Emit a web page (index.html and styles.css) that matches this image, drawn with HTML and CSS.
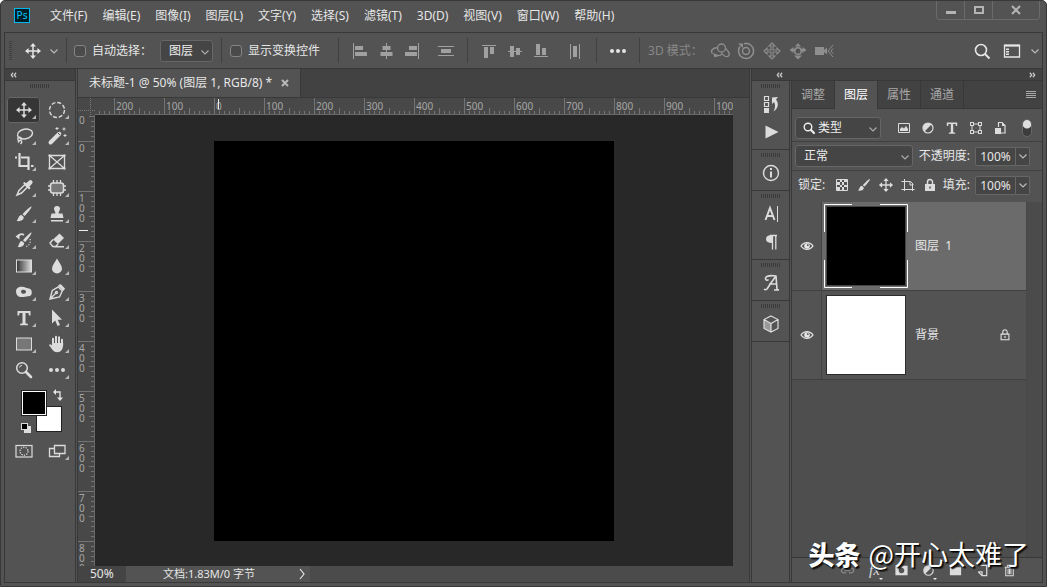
FILE: index.html
```html
<!DOCTYPE html>
<html lang="zh-CN">
<head>
<meta charset="utf-8">
<title>未标题-1</title>
<link rel="stylesheet" href="styles.css">
</head>
<body>
<svg class="defs" aria-hidden="true">
  <symbol id="move" viewBox="0 0 24 24"><path d="M12 6v12M6 12h12" stroke="currentColor" stroke-width="1.5"/><path d="M12 4l3 3.6H9zM12 20l3-3.6H9zM4 12l3.6-3v6zM20 12l-3.6-3v6z" fill="currentColor"/></symbol>
  <symbol id="ellipse" viewBox="0 0 24 24"><circle cx="12" cy="12" r="7.5" fill="none" stroke="currentColor" stroke-width="1.4" stroke-dasharray="4 1.9"/></symbol>
  <symbol id="lasso" viewBox="0 0 24 24"><g fill="none" stroke="currentColor" stroke-width="1.4"><ellipse cx="13" cy="10" rx="7.600" ry="4.800" transform="rotate(-12 13 10)"/><circle cx="7.500" cy="15" r="1.700"/><path d="M9 16.500c1.500 1 .5 2.500-.5 3.500M7 17l-1 1.500"/></g></symbol>
  <symbol id="wand" viewBox="0 0 24 24"><path d="M5.500 18.500L14 10" stroke="currentColor" stroke-width="4" stroke-linecap="round"/><path d="M14.500 9.500l1-1" stroke="currentColor" stroke-width="3"/><path d="M13 9l2 2" stroke="#535353"/><path d="M12 3v3M10.500 4.500h3M19 3.500v3M17.500 5h3M20 10v3M18.500 11.500h3" stroke="currentColor"/></symbol>
  <symbol id="crop" viewBox="0 0 24 24"><path d="M7.500 3v13H17M3 7.500h2M9 7.500h7.500V20" fill="none" stroke="currentColor" stroke-width="2.200"/><path d="M19 15h2.500v2H19z" fill="currentColor"/></symbol>
  <symbol id="frame" viewBox="0 0 24 24"><path d="M4.500 5.500h15v13h-15zM4.500 5.500l15 13M19.500 5.500l-15 13" fill="none" stroke="currentColor" stroke-width="1.3"/><path d="M3.500 4.500h2v2h-2zM18.500 4.500h2v2h-2zM3.500 17.500h2v2h-2zM18.500 17.500h2v2h-2z" fill="currentColor"/></symbol>
  <symbol id="dropper" viewBox="0 0 24 24"><path d="M5 19l2-4.500 6-6 2.500 2.500-6 6z" fill="none" stroke="currentColor" stroke-width="1.5"/><path d="M11 7l1.500-1 1.500 1.300L17 4.700a2 2 0 0 1 3 3L17.500 10.500l1 1.700-1.500 1.300z" fill="currentColor"/></symbol>
  <symbol id="patch" viewBox="0 0 24 24"><rect x="5.500" y="7" width="13" height="10" rx="2.500" fill="#777" stroke="currentColor" stroke-width="1.500"/><path d="M8.500 4v3M12 4v3M15.500 4v3M8.500 17v3M12 17v3M15.500 17v3M3 10h3M3 14h3M18 10h3M18 14h3" stroke="currentColor" stroke-width="1.300"/></symbol>
  <symbol id="brush" viewBox="0 0 24 24"><path d="M19.500 4.500c.8.800-5 7.900-7 9.500l-2-1.700C12 10.300 18.700 3.700 19.500 4.500zM9.500 13l2.200 2c.3 3-3.200 4.700-7.200 4 1.900-1.300 1.600-5.500 5-6z" fill="currentColor"/></symbol>
  <symbol id="stamp" viewBox="0 0 24 24"><path d="M12 4a3 3 0 0 1 3 3c0 1.700-1.400 2-1.400 4.500h3.900l1 4.500h-13l1-4.500h3.900C10.400 9 9 8.700 9 7a3 3 0 0 1 3-3zM6 18h12v1.500H6z" fill="currentColor"/></symbol>
  <symbol id="history" viewBox="0 0 24 24"><path d="M19.500 4.500c.8.800-4.500 7.900-6.500 9.500l-2-1.700C12.500 10.300 18.700 3.700 19.500 4.500zM10 13l2.200 2c0 3-3.200 4.700-6.700 4 1.900-1.300 1.100-5.500 4.500-6zM3.500 8.500l4-3v6z" fill="currentColor"/><path d="M6 8c2-2 4-2.500 6-1" fill="none" stroke="currentColor" stroke-width="1.600"/><path d="M18 11c1 4-1 7-5 8" fill="none" stroke="currentColor" stroke-width="1.2" stroke-dasharray="1.2 1.500"/></symbol>
  <symbol id="eraser" viewBox="0 0 24 24"><path d="M14.500 5.500L19 10l-6 6-5-4.500z" fill="currentColor"/><path d="M8 11.500L5 15l2.800 3.500h3L13 16M9 18.700h10" fill="none" stroke="currentColor" stroke-width="1.4"/></symbol>
  <linearGradient id="fade"><stop offset="0" stop-color="#333"/><stop offset="1" stop-color="#ddd"/></linearGradient>
  <symbol id="gradient" viewBox="0 0 24 24"><rect x="4.500" y="6" width="15" height="12" fill="url(#fade)" stroke="currentColor"/></symbol>
  <symbol id="drop" viewBox="0 0 24 24"><path d="M12 4.500c2 3.700 5 7 5 10a5 5 0 0 1-10 0c0-3 3-6.300 5-10z" fill="currentColor"/></symbol>
  <symbol id="dodge" viewBox="0 0 24 24"><path fill-rule="evenodd" d="M4 11.500c0-3 2.500-5 6-4.800 3 .2 4 1.300 6 1.600 2.500.4 3.800 1.500 3.800 4 0 2.700-1.300 4.200-3.800 4-2-.1-4 1-7 .8-3-.2-5-2.100-5-5.600zM9 11.500c0 1.500 1.200 2.300 2.700 2.300S14 13 14 11.800s-1-2.100-2.500-2.100S9 10.300 9 11.500z" fill="currentColor"/></symbol>
  <symbol id="pen" viewBox="0 0 24 24"><g fill="none" stroke="currentColor" stroke-width="1.4"><path d="M5 19l2.300-8.500 6-3.500 4 4-2.800 6zM5 19l6-6"/><circle cx="11.500" cy="12.500" r="1"/></g><path d="M13 5.500L15.500 4l4.500 4.500-1.500 2.500z" fill="currentColor"/></symbol>
  <symbol id="type" viewBox="0 0 24 24"><path d="M5.500 5h13v4.500H17L16.300 7H13.500v10.300l2.500.7v1.200H8v-1.200l2.500-.7V7H7.700L7 9.500H5.500z" fill="currentColor"/></symbol>
  <symbol id="arrow" viewBox="0 0 24 24"><path d="M7 3.500v14l3.200-3 2.300 5.500 2.500-1-2.300-5.300H17z" fill="currentColor"/></symbol>
  <symbol id="rect" viewBox="0 0 24 24"><rect x="4.500" y="6" width="15" height="12" fill="#777" stroke="currentColor"/></symbol>
  <symbol id="hand" viewBox="0 0 24 24"><path d="M8 12.500V6.700M11 11.500V4.700M14 11.500V5.200M17 12.500V7.700" stroke="currentColor" stroke-width="2" stroke-linecap="round"/><path d="M7 11h11.200c.3 5-1.700 9.300-5.700 9.300-4.500 0-5.500-3.500-8.500-7 .7-1.800 2-1 3 .4z" fill="currentColor"/></symbol>
  <symbol id="zoomer" viewBox="0 0 24 24"><circle cx="10" cy="10" r="5.300" fill="none" stroke="currentColor" stroke-width="1.5"/><path d="M14 14l5 5" stroke="currentColor" stroke-width="2.600" stroke-linecap="round"/><path d="M7.500 9.500a3 3 0 0 1 2.500-2.300" fill="none" stroke="currentColor"/></symbol>
  <symbol id="dots" viewBox="0 0 24 24"><g fill="currentColor"><circle cx="6" cy="12" r="2"/><circle cx="12" cy="12" r="2"/><circle cx="18" cy="12" r="2"/></g></symbol>
  <symbol id="mask" viewBox="0 0 24 24"><rect x="4" y="6.500" width="16" height="11.500" fill="none" stroke="currentColor" stroke-width="1.2"/><circle cx="12" cy="12.200" r="4" fill="none" stroke="currentColor" stroke-width="1.300" stroke-dasharray="1.300 1.200"/></symbol>
  <symbol id="screens" viewBox="0 0 24 24"><path d="M9 9.500H4.500v8h10V15M9.500 6.500h10.500v8H9.500z" fill="none" stroke="currentColor" stroke-width="1.300"/></symbol>
  <symbol id="swap" viewBox="0 0 12 12"><path d="M2 3h6v6" fill="none" stroke="currentColor" stroke-width="1.3"/><path d="M1 3l3-3v6zM8 12L5 8.500h6z" fill="currentColor"/></symbol>
  <symbol id="chev" viewBox="0 0 10 10"><path d="M1.500 3.500L5 7l3.500-3.500" fill="none" stroke="currentColor" stroke-width="1.200"/></symbol>
  <symbol id="dleft" viewBox="0 0 10 8"><path d="M4.500 1L2 4l2.500 3M8.500 1L6 4l2.500 3" fill="none" stroke="currentColor" stroke-width="1.600"/></symbol>
  <symbol id="dright" viewBox="0 0 10 8"><path d="M1.500 1L4 4 1.500 7M5.500 1L8 4 5.500 7" fill="none" stroke="currentColor" stroke-width="1.600"/></symbol>
  <symbol id="al-left" viewBox="0 0 24 24"><path d="M5 4h1v16H5zM7 7h8v4H7zM7 13h12v4H7z" fill="currentColor"/></symbol>
  <symbol id="al-center" viewBox="0 0 24 24"><path d="M12 4h1v16h-1zM8.500 7h8v4h-8zM6.500 13h12v4h-12z" fill="currentColor"/></symbol>
  <symbol id="al-right" viewBox="0 0 24 24"><path d="M18 4h1v16h-1zM9 7h8v4H9zM5 13h12v4H5z" fill="currentColor"/></symbol>
  <symbol id="al-vdist" viewBox="0 0 24 24"><path d="M4 7h16v1H4zM7 10h10v4H7zM4 16h16v1H4z" fill="currentColor"/></symbol>
  <symbol id="al-top" viewBox="0 0 24 24"><path d="M5 6h14v1H5zM7 8h4v11H7zM13 8h4v7h-4z" fill="currentColor"/></symbol>
  <symbol id="al-mid" viewBox="0 0 24 24"><path d="M5 12h14v1H5zM7 7h4v11H7zM13 9h4v7h-4z" fill="currentColor"/></symbol>
  <symbol id="al-bottom" viewBox="0 0 24 24"><path d="M5 17h14v1H5zM7 5h4v11H7zM13 9h4v7h-4z" fill="currentColor"/></symbol>
  <symbol id="al-hdist" viewBox="0 0 24 24"><path d="M7 5h1v15H7zM10 7h4v11h-4zM16 5h1v15h-1z" fill="currentColor"/></symbol>
  <symbol id="orbit" viewBox="0 0 24 24"><g fill="none" stroke="currentColor" stroke-width="1.300"><circle cx="13.500" cy="9" r="4"/><path d="M9.500 8.500C4.500 9 2 12 4.500 14.500M17.500 9.500c3 2.500 4.500 5.500 3 7.500-2 1.500-5 0-6.500-2.500-1 2-3 2.500-5 2"/></g><path d="M5 14l6.500 2.500-5 2z" fill="currentColor"/></symbol>
  <symbol id="roll" viewBox="0 0 24 24"><g fill="none" stroke="currentColor" stroke-width="1.500"><circle cx="12" cy="12" r="3.500"/><path d="M6 7.500a7.500 7.500 0 1 0 4-2.800"/></g><path d="M4 4.500h5v4.500z" fill="currentColor"/></symbol>
  <symbol id="pan3d" viewBox="0 0 24 24"><path d="M12 4l3 3h-2v4h4V9l3 3-3 3v-2h-4v4h2l-3 3-3-3h2v-4H7v2l-3-3 3-3v2h4V7H9z" fill="none" stroke="currentColor" stroke-width="1.100"/></symbol>
  <symbol id="slide" viewBox="0 0 24 24"><circle cx="12" cy="12" r="3.300" fill="none" stroke="currentColor" stroke-width="1.500"/><path d="M12 4l3 3.500H9zM12 20.500l4-4H8zM3.500 11l4-3v2h2v2h-2v2zM20.500 11l-4-3v2h-2v2h2v2z" fill="currentColor"/></symbol>
  <symbol id="camera" viewBox="0 0 24 24"><path d="M3 8h9v8H3zM12 11l3-2.500v7L12 13z" fill="currentColor"/><path d="M21 6l-5 6 5 6M21 9.500L19 12l2 2.500" fill="none" stroke="currentColor"/></symbol>
  <symbol id="search" viewBox="0 0 24 24"><circle cx="11" cy="11" r="5.500" fill="none" stroke="currentColor" stroke-width="1.600"/><path d="M15 15l4.500 4.500" stroke="currentColor" stroke-width="2"/></symbol>
  <symbol id="find" viewBox="0 0 16 16"><circle cx="7" cy="7" r="3.800" fill="none" stroke="currentColor" stroke-width="1.400"/><path d="M10 10l3 3" stroke="currentColor" stroke-width="2.200" stroke-linecap="round"/></symbol>
  <symbol id="space" viewBox="0 0 24 24"><path d="M4.500 6.500h15v11.500h-15z" fill="none" stroke="currentColor" stroke-width="1.300"/><path d="M4 5.500h16V7.500H4zM6 9.500h3V11H6zM6 12h3v1.500H6zM6 14.500h3V16H6z" fill="currentColor"/></symbol>
  <symbol id="steps" viewBox="0 0 24 24"><path d="M5.500 4.500h4v4h-4zM5.500 10.500h4v4h-4z" fill="none" stroke="currentColor" stroke-width="1.200"/><path d="M5 16h5v5H5zM13 5.500l6-.5-2 2.500c3 4 2.500 8.500-2.500 12 2-4 2-7 .5-9.500L13 12z" fill="currentColor"/></symbol>
  <symbol id="play" viewBox="0 0 24 24"><path d="M6.500 5.500v13l13-6.500z" fill="currentColor"/></symbol>
  <symbol id="info" viewBox="0 0 24 24"><circle cx="12" cy="12" r="7.500" fill="none" stroke="currentColor" stroke-width="1.400"/><path d="M11 7h2v2h-2zM11 10.500h2v6h-2z" fill="currentColor"/></symbol>
  <symbol id="char" viewBox="0 0 24 24"><path d="M6.500 18l4.500-12 4.500 12M8 14h6" fill="none" stroke="currentColor" stroke-width="2"/><path d="M18.500 4v16" stroke="currentColor"/></symbol>
  <symbol id="para" viewBox="0 0 24 24"><path d="M13 5v8c-4 0-6-1.500-6-4s2-4 6-4z" fill="currentColor"/><path d="M11 5.500h7M13.500 5v14.500M16.800 5v14.500" stroke="currentColor" stroke-width="1.300"/></symbol>
  <symbol id="glyph" viewBox="0 0 24 24"><path d="M17 5l1 13c.3 1 1 1 2 .7M17.500 5c-5-.5-10-1-11 2-.4 2 1.500 3 3 1.500M17 5C14 9 10.500 14 8 18c-1 1-2 1-3 0M10 13h7M15 19h5" fill="none" stroke="currentColor" stroke-width="1.600"/></symbol>
  <symbol id="cube" viewBox="0 0 24 24"><path d="M12 12v8l-7-3.500V8z" fill="#999"/><path d="M12 4l7 3.500v9L12 20l-7-3.500v-9zM5 7.500l7 4 7-4M12 11.500V20" fill="none" stroke="currentColor" stroke-width="1.200"/></symbol>
  <symbol id="image" viewBox="0 0 16 16"><path d="M2.500 3.500h11v9h-11z" fill="none" stroke="currentColor"/><path d="M4 11V9l2-2 2 1.500L10 6l2 3v2z" fill="currentColor"/></symbol>
  <symbol id="adjust" viewBox="0 0 16 16"><circle cx="8" cy="8" r="5" fill="none" stroke="currentColor" stroke-width="1.200"/><path d="M4.500 11.500l7-7a5 5 0 0 0-7 0 5 5 0 0 0 0 7z" fill="currentColor"/></symbol>
  <symbol id="shape" viewBox="0 0 16 16"><path d="M4 4h8v8H4z" fill="none" stroke="currentColor"/><path d="M2 2h4v4H2zM10 2h4v4h-4zM2 10h4v4H2zM10 10h4v4h-4z" fill="currentColor"/><path d="M3 3h2v2H3zM11 3h2v2h-2zM3 11h2v2H3zM11 11h2v2h-2z" fill="#535353"/></symbol>
  <symbol id="smart" viewBox="0 0 16 16"><path d="M6.500 7V2.500H10l3 3v7.500H9" fill="none" stroke="currentColor" stroke-width="1.200"/><path d="M10 2v4h3.500zM3 8h6v6H3z" fill="currentColor"/></symbol>
  <symbol id="checker" viewBox="0 0 16 16"><path d="M2.500 2.500h11v11h-11z" fill="none" stroke="currentColor"/><path d="M6 3h2v2H6zM10 3h3v2h-3zM3 5h3v3H3zM8 5h2v3H8zM6 8h2v2H6zM10 8h3v2h-3zM3 10h3v3H3zM8 10h2v3H8z" fill="currentColor"/></symbol>
  <symbol id="board" viewBox="0 0 16 16"><path d="M4.500 2v12M1.500 4.500h9l3 3M12.500 7v7M1.500 12.500h13M10 5v3h3" fill="none" stroke="currentColor"/></symbol>
  <symbol id="lock" viewBox="0 0 16 16"><path d="M5.500 7.500V5a2.500 2.500 0 0 1 5 0v2.500" fill="none" stroke="currentColor" stroke-width="1.500"/><path fill-rule="evenodd" d="M3 7h10v7H3zM7.200 9.500h1.600v2H7.200z" fill="currentColor"/></symbol>
  <symbol id="lock-line" viewBox="0 0 16 16"><path d="M5.500 7V4.500a2.500 2.500 0 0 1 5 0V7M3.500 7h9v6.500h-9z" fill="none" stroke="currentColor" stroke-width="1.200"/><path d="M7.200 9.500h1.600V11H7.200z" fill="currentColor"/></symbol>
  <symbol id="eye" viewBox="0 0 16 16"><path d="M2 8c3-4.500 9-4.500 12 0-3 4.500-9 4.500-12 0z" fill="none" stroke="currentColor" stroke-width="1.300"/><circle cx="8" cy="8" r="2.800" fill="currentColor"/><circle cx="8.800" cy="7.200" r=".9" fill="#535353"/></symbol>
  <symbol id="link" viewBox="0 0 16 16"><path d="M6.500 5.500H4a2.500 2.500 0 0 0 0 5h2.500M9.500 5.500H12a2.500 2.500 0 0 1 0 5H9.500M5 8h6" fill="none" stroke="currentColor" stroke-width="1.400"/></symbol>
  <symbol id="addmask" viewBox="0 0 16 16"><path fill-rule="evenodd" d="M1.500 3h13v10h-13zM8 5a3 3 0 1 0 .01 0z" fill="currentColor"/></symbol>
  <symbol id="folder" viewBox="0 0 16 16"><path d="M2 3h5l1 1.500h6V13H2z" fill="currentColor"/></symbol>
  <symbol id="newlayer" viewBox="0 0 16 16"><path d="M4.500 2.500h8v11H7.500l-4-4M7.500 13.500v-4h-4" fill="none" stroke="currentColor" stroke-width="1.300"/></symbol>
  <symbol id="trash" viewBox="0 0 16 16"><path d="M3 4.500h10M6 4V2.500h4V4M4 5v8.500h8V5M6.500 6v6M9.500 6v6M8 6v6" fill="none" stroke="currentColor" stroke-width="1.100"/></symbol>
  <symbol id="brackets" viewBox="0 0 84 84"><path d="M28 .5H.5V28M56 .5h27.500V28M83.500 56v27.500H56M28 83.500H.5V56" fill="none" stroke="currentColor"/></symbol>
</svg>

<div class="window">
  <header class="titlebar">
    <span class="logo">Ps</span>
    <nav class="menu">
      <button>文件(F)</button><button>编辑(E)</button><button>图像(I)</button><button>图层(L)</button><button>文字(Y)</button><button>选择(S)</button><button>滤镜(T)</button><button>3D(D)</button><button>视图(V)</button><button>窗口(W)</button><button>帮助(H)</button>
    </nav>
    <div class="winctl">
      <button aria-label="最小化"><svg viewBox="0 0 12 12"><path d="M1 7h10v3H1z" fill="currentColor"/></svg></button>
      <button aria-label="最大化"><svg viewBox="0 0 12 12"><path d="M2 3h8v6H2z" fill="none" stroke="currentColor" stroke-width="2"/></svg></button>
      <button class="close" aria-label="关闭"><svg viewBox="0 0 12 12"><path d="M2 2l8 8M10 2l-8 8" stroke="currentColor" stroke-width="2"/></svg></button>
    </div>
  </header>

  <div class="shell">
    <div class="options">
      <section class="group first">
        <span class="vgrip"></span>
        <button class="ico" aria-label="移动工具"><svg><use href="#move"/></svg></button>
        <button class="tiny" aria-label="预设"><svg><use href="#chev"/></svg></button>
      </section>
      <section class="group pick">
        <label class="check"><input type="checkbox">自动选择：</label>
        <span class="drop small"><select aria-label="自动选择对象"><option>图层</option></select><svg><use href="#chev"/></svg></span>
      </section>
      <section class="group show">
        <label class="check"><input type="checkbox">显示变换控件</label>
      </section>
      <section class="group dim">
        <button class="ico" aria-label="左对齐"><svg><use href="#al-left"/></svg></button><button class="ico" aria-label="水平居中"><svg><use href="#al-center"/></svg></button><button class="ico" aria-label="右对齐"><svg><use href="#al-right"/></svg></button><button class="ico apart" aria-label="垂直分布"><svg><use href="#al-vdist"/></svg></button>
      </section>
      <section class="group dim">
        <button class="ico" aria-label="顶对齐"><svg><use href="#al-top"/></svg></button><button class="ico" aria-label="垂直居中"><svg><use href="#al-mid"/></svg></button><button class="ico" aria-label="底对齐"><svg><use href="#al-bottom"/></svg></button><button class="ico apart" aria-label="水平分布"><svg><use href="#al-hdist"/></svg></button>
      </section>
      <section class="group"><button class="ico" aria-label="更多"><svg><use href="#dots"/></svg></button></section>
      <section class="group last dim">
        <span class="mode">3D 模式：</span>
        <button class="ico" aria-label="环绕"><svg><use href="#orbit"/></svg></button><button class="ico" aria-label="滚动"><svg><use href="#roll"/></svg></button><button class="ico" aria-label="平移"><svg><use href="#pan3d"/></svg></button><button class="ico" aria-label="滑动"><svg><use href="#slide"/></svg></button><button class="ico" aria-label="缩放相机"><svg><use href="#camera"/></svg></button>
      </section>
      <section class="group right">
        <button class="ico" aria-label="搜索"><svg><use href="#search"/></svg></button>
        <button class="ico" aria-label="工作区"><svg><use href="#space"/></svg></button>
        <button class="tiny" aria-label="工作区菜单"><svg><use href="#chev"/></svg></button>
      </section>
    </div>

    <div class="workspace">
      <aside class="tools">
        <div class="collapse"><button aria-label="折叠工具栏"><svg><use href="#dleft"/></svg></button></div>
        <span class="grip"></span>
        <div class="toolgrid">
          <button class="on more" aria-label="移动"><svg><use href="#move"/></svg></button><button class="more" aria-label="椭圆选框"><svg><use href="#ellipse"/></svg></button>
          <button class="more" aria-label="套索"><svg><use href="#lasso"/></svg></button><button class="more" aria-label="魔棒"><svg><use href="#wand"/></svg></button>
          <button class="more" aria-label="裁剪"><svg><use href="#crop"/></svg></button><button aria-label="图框"><svg><use href="#frame"/></svg></button>
          <button class="more" aria-label="吸管"><svg><use href="#dropper"/></svg></button><button class="more" aria-label="修补"><svg><use href="#patch"/></svg></button>
          <button class="more" aria-label="画笔"><svg><use href="#brush"/></svg></button><button class="more" aria-label="仿制图章"><svg><use href="#stamp"/></svg></button>
          <button class="more" aria-label="历史记录画笔"><svg><use href="#history"/></svg></button><button class="more" aria-label="橡皮擦"><svg><use href="#eraser"/></svg></button>
          <button class="more" aria-label="渐变"><svg><use href="#gradient"/></svg></button><button class="more" aria-label="模糊"><svg><use href="#drop"/></svg></button>
          <button class="more" aria-label="减淡"><svg><use href="#dodge"/></svg></button><button class="more" aria-label="钢笔"><svg><use href="#pen"/></svg></button>
          <button class="more" aria-label="文字"><svg><use href="#type"/></svg></button><button class="more" aria-label="路径选择"><svg><use href="#arrow"/></svg></button>
          <button class="more" aria-label="矩形"><svg><use href="#rect"/></svg></button><button class="more" aria-label="抓手"><svg><use href="#hand"/></svg></button>
          <button aria-label="缩放"><svg><use href="#zoomer"/></svg></button><button class="more" aria-label="编辑工具栏"><svg><use href="#dots"/></svg></button>
        </div>
        <div class="swatches">
          <button class="back" aria-label="背景色"></button>
          <button class="fore" aria-label="前景色"></button>
          <button class="swap" aria-label="切换颜色"><svg><use href="#swap"/></svg></button>
          <button class="reset" aria-label="默认颜色"></button>
        </div>
        <div class="toolgrid">
          <button aria-label="快速蒙版"><svg><use href="#mask"/></svg></button><button class="more" aria-label="屏幕模式"><svg><use href="#screens"/></svg></button>
        </div>
      </aside>

      <main class="doc">
        <div class="doctabs"><div class="doctab"><span>未标题-1 @ 50% (图层 1, RGB/8) *</span><button aria-label="关闭文档"><svg viewBox="0 0 8 8"><path d="M1 1l6 6M7 1L1 7" stroke="currentColor" stroke-width="2"/></svg></button></div></div>
        <div class="view">
          <div class="corner"></div>
          <div class="hruler"><div class="hscale"><span></span><span>200</span><span>100</span><span>0</span><span>100</span><span>200</span><span>300</span><span>400</span><span>500</span><span>600</span><span>700</span><span>800</span><span>900</span><span>1000</span></div><i class="hmark"></i></div>
          <div class="side"></div>
          <div class="vruler"><div class="vscale"><span class="tail">0</span><span>0</span><span>100</span><span>200</span><span>300</span><span>400</span><span>500</span><span>600</span><span>700</span><span>800</span></div><i class="vmark"></i></div>
          <div class="pasteboard"><div class="artwork"></div></div>
          <div class="side"></div>
          <footer class="status"><span class="zoom">50%</span><button class="docsize"><span>文档:1.83M/0 字节</span><svg viewBox="0 0 8 12"><path d="M2 1l4 5-4 5" fill="none" stroke="currentColor" stroke-width="1.200"/></svg></button></footer>
        </div>
      </main>

      <aside class="dock">
        <div class="collapse"><button class="strip" aria-label="展开面板"><svg><use href="#dleft"/></svg></button><button aria-label="折叠面板"><svg><use href="#dright"/></svg></button></div>
        <div class="dockbody">
          <div class="iconbar">
            <section><span class="grip"></span><button aria-label="历史记录"><svg><use href="#steps"/></svg></button><button aria-label="动作"><svg><use href="#play"/></svg></button></section>
            <section><span class="grip"></span><button aria-label="信息"><svg><use href="#info"/></svg></button></section>
            <section><span class="grip"></span><button aria-label="字符"><svg><use href="#char"/></svg></button><button aria-label="段落"><svg><use href="#para"/></svg></button></section>
            <section><span class="grip"></span><button aria-label="字形"><svg><use href="#glyph"/></svg></button></section>
            <section><span class="grip"></span><button aria-label="3D"><svg><use href="#cube"/></svg></button></section>
          </div>
          <div class="panel">
            <div class="tabs"><button>调整</button><button class="active">图层</button><button>属性</button><button>通道</button><button class="burger" aria-label="面板菜单"><svg viewBox="0 0 10 8"><path d="M0 .5h10M0 2.500h10M0 4.500h10M0 6.500h10" stroke="currentColor"/></svg></button></div>
            <div class="row filter">
              <span class="drop kind"><svg class="lead"><use href="#find"/></svg><select aria-label="筛选类型"><option>类型</option></select><svg><use href="#chev"/></svg></span>
              <div class="minis wide"><button aria-label="像素"><svg><use href="#image"/></svg></button><button aria-label="调整"><svg><use href="#adjust"/></svg></button><button aria-label="文字"><svg viewBox="2 2 20 20"><use href="#type" width="24" height="24"/></svg></button><button aria-label="形状"><svg><use href="#shape"/></svg></button><button aria-label="智能对象"><svg><use href="#smart"/></svg></button></div>
              <input class="switch" type="checkbox" checked aria-label="开关筛选">
            </div>
            <div class="row">
              <span class="drop blend"><select aria-label="混合模式"><option>正常</option></select><svg><use href="#chev"/></svg></span>
              <label class="num"><span>不透明度:</span><input type="text" value="100%"></label><button class="pop" aria-label="不透明度滑块"><svg><use href="#chev"/></svg></button>
            </div>
            <div class="row locks">
              <span>锁定:</span>
              <div class="minis"><button aria-label="锁定透明像素"><svg><use href="#checker"/></svg></button><button aria-label="锁定图像像素"><svg viewBox="2 2 20 20"><use href="#brush" width="24" height="24"/></svg></button><button aria-label="锁定位置"><svg viewBox="3 3 18 18"><use href="#move" width="24" height="24"/></svg></button><button aria-label="防止嵌套"><svg><use href="#board"/></svg></button><button aria-label="锁定全部"><svg><use href="#lock"/></svg></button></div>
              <label class="num"><span>填充:</span><input type="text" value="100%"></label><button class="pop" aria-label="填充滑块"><svg><use href="#chev"/></svg></button>
            </div>
            <div class="list">
              <div class="layers">
                <div class="layer selected"><button class="vis" aria-label="可见性"><svg><use href="#eye"/></svg></button><div class="info"><div class="thumb black"><svg><use href="#brackets"/></svg></div><span>图层&nbsp; 1</span></div></div>
                <div class="layer"><button class="vis" aria-label="可见性"><svg><use href="#eye"/></svg></button><div class="info"><div class="thumb"></div><span>背景</span><svg class="locked"><use href="#lock-line"/></svg></div></div>
              </div>
              <div class="track"></div>
            </div>
            <div class="actions"><button aria-label="链接" class="off"><svg><use href="#link"/></svg></button><button class="fx">fx</button><button aria-label="添加蒙版"><svg><use href="#addmask"/></svg></button><button class="pt" aria-label="调整图层"><svg><use href="#adjust"/></svg></button><button aria-label="新建组"><svg><use href="#folder"/></svg></button><button aria-label="新建图层"><svg><use href="#newlayer"/></svg></button><button aria-label="删除"><svg><use href="#trash"/></svg></button></div>
          </div>
        </div>
      </aside>
    </div>
  </div>
  <div class="credit"><b>头条</b><span>@开心太难了</span></div>
</div>
</body>
</html>
```
FILE: styles.css
```css
* { box-sizing: border-box; }
html, body { height: 100%; margin: 0; }
body { background: #fff; color: #e6e6e6; font: 12px/16px "Noto Sans", "Noto Sans CJK SC", sans-serif; overflow: hidden; }
button, select, input { font: inherit; color: inherit; margin: 0; padding: 0; border: 0; background: none; border-radius: 0; }
button { display: flex; align-items: center; justify-content: center; }
svg { display: block; flex: none; }
.defs { position: absolute; width: 0; height: 0; }

.window { position: relative; height: 100%; display: flex; flex-direction: column; background: #535353; border: 1px solid #383838; border-radius: 5px 5px 0 0; }
.titlebar { height: 31px; flex: none; display: flex; align-items: center; padding: 0 6px 2px 13px; }
.logo { width: 16px; height: 15px; background: #001d26; border: 1px solid #00b8ee; color: #00c8ff; font-size: 10px; line-height: 12px; text-align: center; }
.menu { display: flex; gap: 15px; margin-left: 20px; }
.winctl { align-self: flex-start; margin-left: auto; display: flex; border: 1px solid #6a6a6a; border-top: 0; border-radius: 0 0 4px 4px; color: #b4b4b4; }
.winctl button { width: 28px; height: 18px; border-right: 1px solid #6a6a6a; }
.winctl button.close { width: 46px; border-right: 0; }
.winctl svg { width: 12px; height: 12px; }

.shell { flex: 1; min-height: 0; margin: 0 3px 3px; border: 1px solid #383838; display: flex; flex-direction: column; }
.options { height: 36px; flex: none; display: flex; align-items: center; border-bottom: 1px solid #383838; }
.group { height: 25px; display: flex; align-items: center; padding: 0 8px; border-right: 1px solid #404040; }
.group.first { padding: 0 4px; }
.group.pick { gap: 8px; padding-left: 7px; }
.group.show { padding-right: 18px; }
.group.last { border: 0; }
.group.right { margin-left: auto; border: 0; padding: 0 1px; gap: 4px; }
.dim { color: #a0a0a0; }
.ico { width: 26px; height: 24px; }
.ico svg, .toolgrid svg, .iconbar svg { width: 24px; height: 24px; }
.ico.apart { margin-left: 8px; }
.tiny { width: 16px; height: 24px; color: #b8b8b8; }
.right .tiny { width: 12px; }
.tiny svg, .drop svg, .pop svg { width: 10px; height: 10px; }
.vgrip { width: 3px; height: 20px; margin-right: 8px; background: repeating-linear-gradient(#404040 0 1px, transparent 1px 2px); }
.check { display: flex; align-items: center; gap: 6px; }
.check input { appearance: none; width: 12px; height: 12px; border: 1px solid #858585; border-radius: 3px; background: #4a4a4a; }
.mode { width: 59px; color: #888; }
.last .ico { color: #8e8e8e; }

.drop { position: relative; display: flex; height: 22px; }
.drop select { appearance: none; width: 100%; padding: 0 8px; border: 1px solid #666; border-radius: 3px; background: #454545; color: #eee; }
.drop svg { position: absolute; right: 3px; top: 7px; color: #aaa; }
.drop.small { width: 53px; }
.drop.kind { width: 86px; }
.drop.kind select { padding-left: 22px; }
.drop .lead { left: 6px; top: 3px; width: 16px; height: 16px; color: #eee; }
.drop.blend { width: 118px; }

.workspace { flex: 1; min-height: 0; display: flex; }
.collapse { height: 12px; flex: none; display: flex; align-items: center; background: #424242; border-bottom: 1px solid #383838; color: #ccc; }
.collapse svg { width: 9px; height: 6px; }
.grip { display: block; width: 19px; height: 4px; background: repeating-linear-gradient(90deg, #3c3c3c 0 1px, transparent 1px 2px); }

.tools { width: 71px; flex: none; border-right: 1px solid #383838; }
.tools .collapse button { margin-left: 4px; }
.tools .grip { margin: 3px 0 9px 25px; }
.toolgrid { display: grid; grid-template-columns: 33px 33px; grid-auto-rows: 26px; margin-left: 2px; color: #dcdcdc; }
.toolgrid button { position: relative; }
.toolgrid .on { background: #363636; outline: 1px solid #666; outline-offset: -1px; border-radius: 3px; }
.more::after { content: ""; position: absolute; right: 4px; bottom: 4px; border: 2px solid transparent; border-right-color: #b8b8b8; border-bottom-color: #b8b8b8; }
.swatches { position: relative; height: 55px; }
.swatches button { position: absolute; }
.fore { left: 17px; top: 8px; width: 24px; height: 24px; background: #000; outline: 1px solid #222; border: 1px solid #fff; }
.back { left: 31px; top: 23px; width: 26px; height: 26px; background: #fff; border: 1px solid #222; }
.swap { left: 47px; top: 6px; }
.swap svg { width: 12px; height: 12px; }
.swatches .reset { left: 16px; top: 40px; width: 7px; height: 7px; background: #000; border: 1px solid #ddd; box-shadow: 3px 3px 0 #ddd; }

.doc { flex: 1; min-width: 0; margin-left: 1px; border: solid #383838; border-width: 0 1px; display: flex; flex-direction: column; }
.doctabs { height: 29px; flex: none; display: flex; background: #424242; border-bottom: 1px solid #383838; }
.doctab { display: flex; align-items: center; gap: 9px; padding: 0 11px; background: #535353; border-right: 1px solid #383838; white-space: nowrap; }
.doctab svg { width: 8px; height: 8px; color: #b8b8b8; }
.view { flex: 1; min-height: 0; display: grid; grid-template: 17px minmax(0, 1fr) 16px / 17px minmax(0, 1fr) 16px; background: #4b4b4b; }
.corner { background: linear-gradient(90deg, transparent 12px, #777 12px 13px, transparent 13px) 0 0 / 100% 1px, #484848; background: repeating-linear-gradient(90deg, #777 0 1px, transparent 1px 2px) 0 12px / 100% 1px no-repeat, repeating-linear-gradient(#777 0 1px, transparent 1px 2px) 12px 0 / 1px 100% no-repeat, #484848; }
.hruler { position: relative; overflow: hidden; background: #484848; border-bottom: 1px solid #686868; }
.hscale { display: flex; height: 16px; margin-left: -31px; }
.hscale span { flex: none; width: 50px; padding-left: 2px; font-size: 10px; line-height: 17px; color: #a6a6a6; background: linear-gradient(#747474, #747474) 0 0 / 1px 16px no-repeat, linear-gradient(#747474, #747474) 25px 100% / 1px 6px no-repeat, repeating-linear-gradient(90deg, #747474 0 1px, transparent 1px 5px) 0 100% / 50px 3px no-repeat; }
.hmark { position: absolute; left: 123px; top: 1px; width: 1px; height: 10px; background: #eee; }
.vruler { position: relative; overflow: hidden; background: #484848; border-right: 1px solid #686868; }
.vscale { margin-top: -24px; }
.vscale span { display: block; width: 16px; height: 50px; padding: 2px 9px 0 1px; word-break: break-all; font-size: 10px; line-height: 10px; color: #a6a6a6; background: linear-gradient(#747474, #747474) 0 0 / 16px 1px no-repeat, linear-gradient(#747474, #747474) 100% 25px / 5px 1px no-repeat, repeating-linear-gradient(#747474 0 1px, transparent 1px 5px) 100% 0 / 3px 50px no-repeat; }
.vscale .tail { padding-top: 24px; }
.vmark { position: absolute; left: 1px; top: 115px; width: 9px; height: 1px; background: #eee; }
.pasteboard { display: flex; align-items: center; justify-content: center; overflow: hidden; background: #282828; }
.artwork { flex: none; width: 400px; height: 400px; background: #000; }
.status { grid-column: 1 / -1; display: flex; background: #4b4b4b; }
.zoom { width: 48px; padding-left: 12px; background: #444; }
.docsize { width: 184px; background: #535353; justify-content: space-between; padding: 0 4px 0 37px; font-size: 11px; }
.docsize svg { width: 8px; height: 12px; }

.dock { width: 291px; flex: none; margin-left: 1px; border-left: 1px solid #383838; display: flex; flex-direction: column; }
.dock .collapse { justify-content: space-between; padding: 0 5px 0 23px; }
.dockbody { flex: 1; min-height: 0; display: flex; }
.iconbar { width: 38px; flex: none; border-right: 1px solid #383838; color: #dcdcdc; }
.iconbar section { display: flex; flex-direction: column; align-items: center; padding: 3px 0; border-bottom: 1px solid #383838; }
.iconbar .grip { margin-bottom: 2px; }
.iconbar button { width: 28px; height: 28px; }
.panel { flex: 1; min-width: 0; margin-left: 1px; border-left: 1px solid #383838; display: flex; flex-direction: column; }
.tabs { height: 28px; flex: none; display: flex; background: #424242; box-shadow: inset 0 -1px #383838; color: #a8a8a8; }
.tabs button { width: 43px; padding: 0 9px; border-right: 1px solid #383838; }
.tabs .active { background: #535353; color: #fff; }
.tabs .burger { width: 20px; padding: 0; margin-left: auto; margin-right: 1px; border: 0; }
.burger svg { width: 10px; height: 8px; }
.row { height: 29px; flex: none; display: flex; align-items: center; padding: 0 12px 0 3px; border-bottom: 1px solid #404040; white-space: nowrap; }
.row.filter { height: 33px; padding: 6px 10px 0 3px; }
.row.locks { height: 31px; padding-left: 6px; padding-bottom: 3px; border: 0; }
.minis { display: flex; color: #dcdcdc; margin-left: 6px; }
.minis button { width: 22px; height: 20px; }
.minis svg { width: 16px; height: 16px; }
.minis.wide { margin-left: 11px; }
.minis.wide button { width: 24px; }
.switch { appearance: none; width: 10px; height: 18px; margin-left: auto; border: 1px solid #666; border-radius: 5px; background: radial-gradient(circle at 4px 4px, #ddd 4px, #3c3c3c 5px); }
.num { display: flex; align-items: center; gap: 5px; margin-left: auto; }
.num input { width: 41px; height: 19px; border: 1px solid #666; border-radius: 2px 0 0 2px; background: #454545; text-align: center; }
.pop { width: 14px; height: 19px; background: #454545; border: 1px solid #666; border-left: 0; border-radius: 0 2px 2px 0; color: #bbb; }

.list { flex: 1; min-height: 0; display: flex; background: #4b4b4b; }
.layers { flex: 1; min-width: 0; background: #4e4e4e; }
.track { width: 16px; border-left: 1px solid #484848; }
.layer { display: flex; height: 89px; background: #535353; border-bottom: 1px solid #404040; }
.vis { width: 30px; border-right: 1px solid #444; }
.vis svg { width: 16px; height: 16px; }
.locked { width: 14px; height: 14px; }
.info { flex: 1; display: flex; align-items: center; gap: 9px; padding: 0 14px 0 4px; }
.selected .info { background: #6b6b6b; }
.thumb { position: relative; width: 80px; height: 80px; background: #fff; border: 1px solid #2c2c2c; }
.thumb.black { background: #000; border-color: #444; }
.thumb svg { position: absolute; left: -3px; top: -3px; width: 84px; height: 84px; color: #fff; }
.locked { margin-left: auto; }
.actions { height: 25px; flex: none; display: flex; align-items: center; justify-content: flex-end; padding-right: 19px; border-top: 1px solid #383838; color: #dcdcdc; }
.actions button { position: relative; width: 27px; height: 20px; }
.actions svg { width: 15px; height: 15px; }
.actions .off { color: #888; }
.actions .fx { font: italic 15px/16px "Liberation Serif", serif; }
.fx::after, .pt::after { content: ""; position: absolute; right: 5px; bottom: 0; border: 2px solid transparent; border-top-color: #eee; border-bottom: 0; }

.credit { position: absolute; right: 17px; bottom: 14px; display: flex; gap: 8px; align-items: center; font: 27px/36px "Noto Sans CJK SC", sans-serif; color: #fff; text-shadow: 1px 1px 1px #000, 2px 2px 1px #222; pointer-events: none; }
.credit b { font-size: 26px; font-weight: 900; }
```
